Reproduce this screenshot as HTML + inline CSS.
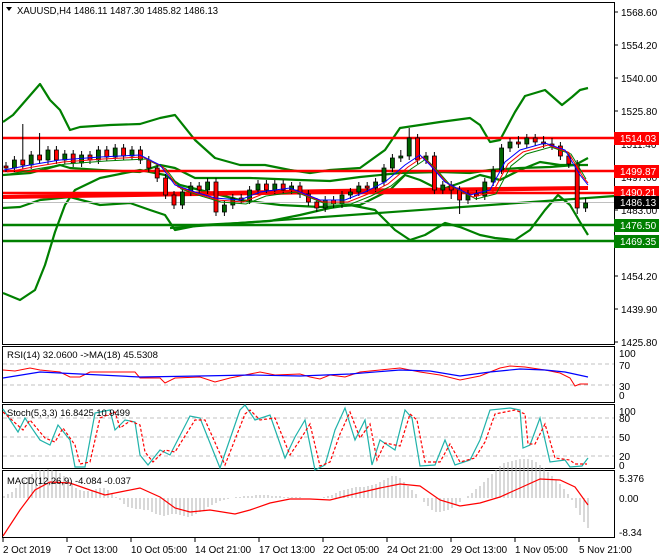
<!DOCTYPE html>
<html><head><meta charset="utf-8">
<style>
html,body{margin:0;padding:0;background:#fff;width:660px;height:560px;overflow:hidden}
svg{display:block;font-family:"Liberation Sans",Tahoma,sans-serif}
</style></head>
<body>
<svg width="660" height="560" xmlns="http://www.w3.org/2000/svg">
<rect width="660" height="560" fill="#fff"/>
<g fill="none" stroke="#000">
<rect x="2.5" y="2.5" width="612" height="342"/>
<rect x="2.5" y="346.5" width="612" height="56"/>
<rect x="2.5" y="404.5" width="612" height="64"/>
<rect x="2.5" y="470.5" width="612" height="67"/>
</g>
<g fill="none" stroke="#008000" stroke-width="2.2" stroke-linejoin="round">
<polyline points="3,122 13,115 40,84 50,100 60,110 70,130 80,127 110,125 140,124 160,118 175,115 195,140 215,158 240,165 265,165 290,170 310,173 330,170 360,168 385,150 400,128 420,125 440,122 470,118 480,125 490,142 500,140 515,112 525,96 545,90 562,105 572,97 580,90 588,88"/>
<polyline points="3,175 30,173 60,165 70,168 100,170 140,172 160,165 175,168 195,178 250,178 300,180 330,181 360,177 400,173 440,172 470,173 490,170 520,168 550,167 575,165 588,165"/>
<polyline points="3,208 20,207 40,200 70,197 100,205 130,203 150,210 165,215 175,230 200,225 240,223 270,221 300,215 330,208 350,205 375,210 395,230 410,240 425,235 445,223 460,227 480,235 495,238 515,240 530,230 545,210 558,195 570,205 580,222 588,235"/>
<polyline points="3,293 20,300 35,290 45,265 55,232 65,205 75,190 100,178 140,170 165,175 180,185 200,190 240,200 280,205 320,207 360,205 390,190 405,175 420,180 440,190 460,183 480,175 500,180 520,170 540,162 560,165 575,165 588,158"/>
<line x1="170" y1="228" x2="615" y2="196"/>
</g>
<g stroke-width="2.5">
<line x1="3" x2="614" y1="138" y2="138" stroke="#ff0000"/>
<line x1="3" x2="614" y1="171" y2="171" stroke="#ff0000"/>
<line x1="3" x2="614" y1="193" y2="193" stroke="#ff0000"/>
<line x1="3" x2="614" y1="225" y2="225" stroke="#008000"/>
<line x1="3" x2="614" y1="241" y2="241" stroke="#008000"/>
</g>
<line x1="3" x2="614" y1="202.5" y2="202.5" stroke="#c0c0c0"/>
<polygon points="3,195 330,189 588,186 588,190 330,194 3,199" fill="#ff0000"/>
<path fill="none" stroke="#000" stroke-width="1" d="M6 162V172M14.4 156V172M22.8 124V169M31.2 151V169M39.6 133V164M48 146V164M56.4 146V164M64.8 150V164M73.2 150V167M81.6 151V167M90 151V164M98.4 146V164M106.8 146V161M115.2 144V161M123.6 144V160M132 146V160M140.4 146V164M148.8 156V172M157.2 164V182M165.6 174V199M174 191V209M182.4 188V209M190.8 182V196M199.2 182V194M207.6 178V194M216 178V216M224.4 201V216M232.8 194V209M241.2 194V204M249.6 186V204M258 180V194M266.4 180V194M274.8 180V194M283.2 180V194M291.6 182V194M300 182V198M308.4 190V206M316.8 198V212M325.2 196V212M333.6 196V208M342 191V208M350.4 188V199M358.8 182V196M367.2 182V192M375.6 178V192M384 164V186M392.4 154V172M400.8 150V162M409.2 128V160M417.6 134V164M426 152V164M434.4 152V194M442.8 181V194M451.2 181V199M459.6 186V214M468 190V204M476.4 190V200M484.8 178V200M493.2 166V186M501.6 144V174M510 138V152M518.4 136V148M526.8 134V148M535.2 134V146M543.6 136V148M552 138V150M560.4 142V160M568.8 152V168M577.2 160V214M585.6 198V212"/>
<path fill="#006400" stroke="#000" stroke-width="0.8" d="M12.4 160h4v8h-4zM29.2 155h4v10h-4zM46 150h4v10h-4zM62.8 154h4v6h-4zM79.6 155h4v8h-4zM96.4 150h4v10h-4zM113.2 148h4v9h-4zM130 150h4v6h-4zM180.4 192h4v13h-4zM188.8 186h4v6h-4zM205.6 182h4v8h-4zM222.4 205h4v7h-4zM230.8 198h4v7h-4zM247.6 190h4v10h-4zM256 184h4v6h-4zM272.8 184h4v6h-4zM289.6 186h4v4h-4zM323.2 200h4v8h-4zM340 195h4v9h-4zM348.4 192h4v3h-4zM356.8 186h4v6h-4zM373.6 182h4v6h-4zM382 168h4v14h-4zM390.4 158h4v10h-4zM398.8 156h4v2h-4zM407.2 138h4v18h-4zM424 156h4v4h-4zM440.8 185h4v5h-4zM466 194h4v6h-4zM482.8 182h4v14h-4zM491.2 170h4v12h-4zM499.6 148h4v22h-4zM508 142h4v6h-4zM524.8 138h4v6h-4zM583.6 203h4v5h-4z"/>
<path fill="#ff0000" stroke="#000" stroke-width="0.8" d="M4 166h4v2h-4zM20.8 160h4v5h-4zM37.6 155h4v5h-4zM54.4 150h4v10h-4zM71.2 154h4v9h-4zM88 155h4v5h-4zM104.8 150h4v7h-4zM121.6 148h4v8h-4zM138.4 150h4v10h-4zM146.8 160h4v8h-4zM155.2 168h4v10h-4zM163.6 178h4v17h-4zM172 195h4v10h-4zM197.2 186h4v4h-4zM214 182h4v30h-4zM239.2 198h4v2h-4zM264.4 184h4v6h-4zM281.2 184h4v6h-4zM298 186h4v8h-4zM306.4 194h4v8h-4zM314.8 202h4v6h-4zM331.6 200h4v4h-4zM365.2 186h4v2h-4zM415.6 138h4v22h-4zM432.4 156h4v34h-4zM449.2 185h4v5h-4zM457.6 190h4v10h-4zM474.4 194h4v2h-4zM516.4 142h4v2h-4zM533.2 138h4v4h-4zM541.6 142h4v2h-4zM550 144h4v2h-4zM558.4 146h4v10h-4zM566.8 156h4v8h-4zM575.2 164h4v44h-4z"/>
<g fill="none" stroke-width="1">
<polyline stroke="#008000" points="10,174 36,169 66,164 106,161 146,159 166,169 181,189 201,196 221,202 246,204 266,196 296,192 326,204 351,204 371,196 391,186 411,169 426,159 436,169 451,186 476,199 496,194 511,166 526,154 551,147 571,154 586,179"/>
<polyline stroke="#ff0000" points="7,172 33,167 63,162 103,159 143,157 163,167 178,187 198,194 218,200 243,202 263,194 293,190 323,202 348,202 368,194 388,184 408,167 423,157 433,167 448,184 473,197 493,192 508,164 523,152 548,145 568,152 583,177 588,183"/>
<polyline stroke="#0000ff" points="4,170 30,165 60,160 100,157 140,155 160,165 175,185 195,192 215,198 240,200 260,192 290,188 320,200 345,200 365,192 385,182 405,165 420,155 430,165 445,182 470,195 490,190 505,162 520,150 545,143 565,150 580,175 588,185"/>
</g>
<g font-size="10" fill="#000">
<path stroke="#000" d="M614 12h4M614 45h4M614 78h4M614 111h4M614 144h4M614 177h4M614 210h4M614 243h4M614 276h4M614 309h4M614 342h4"/>
<text x="621" y="16">1568.60</text><text x="621" y="49">1554.20</text><text x="621" y="82">1540.00</text><text x="621" y="115">1525.80</text><text x="621" y="148">1511.40</text><text x="621" y="181">1497.00</text><text x="621" y="214">1483.00</text><text x="621" y="247">1468.60</text><text x="621" y="280">1454.20</text><text x="621" y="313">1439.90</text><text x="621" y="346">1425.80</text>
</g>
<g font-size="10" fill="#fff">
<rect x="614" y="132" width="45" height="13" fill="#ff0000"/><text x="620" y="142">1514.03</text>
<rect x="614" y="165" width="45" height="13" fill="#ff0000"/><text x="620" y="175">1499.87</text>
<rect x="614" y="186" width="45" height="13" fill="#ff0000"/><text x="620" y="196">1490.21</text>
<rect x="614" y="196" width="45" height="13" fill="#000"/><text x="620" y="206">1486.13</text>
<rect x="614" y="219" width="45" height="13" fill="#008000"/><text x="620" y="229">1476.50</text>
<rect x="614" y="235" width="45" height="13" fill="#008000"/><text x="620" y="245">1469.35</text>
</g>
<polygon points="6,7 12,7 9,11" fill="#000"/>
<text x="17" y="14" font-size="10" textLength="201" lengthAdjust="spacingAndGlyphs">XAUUSD,H4  1486.11 1487.30 1485.82 1486.13</text>
<g stroke="#c0c0c0" stroke-dasharray="4,3"><line x1="3" x2="614" y1="364" y2="364"/><line x1="3" x2="614" y1="385" y2="385"/></g>
<polyline fill="none" stroke="#ff0000" points="3,370 15,371 30,368 40,370 60,372 70,377 80,377 90,372 120,372 135,372 140,378 160,378 165,383 175,378 200,377 215,382 230,378 250,374 260,372 275,375 300,374 310,377 320,379 330,375 345,377 360,372 380,370 400,368 420,372 440,375 460,380 480,376 500,368 510,366 525,367 545,370 560,373 570,378 575,386 580,384 588,384"/>
<polyline fill="none" stroke="#0000ff" stroke-width="1.2" points="3,378 40,372 80,374 140,377 200,376 250,375 300,376 350,374 400,370 430,371 460,376 490,372 520,369 545,370 565,372 588,377"/>
<text x="7" y="358" font-size="9.5" textLength="151" lengthAdjust="spacingAndGlyphs">RSI(14) 32.0600  -&gt;MA(18) 45.5308</text>
<g font-size="10"><text x="619" y="357">100</text><text x="619" y="369">70</text><text x="619" y="390">30</text><text x="619" y="399">0</text></g>
<g stroke="#c0c0c0" stroke-dasharray="4,3"><line x1="3" x2="614" y1="418" y2="418"/><line x1="3" x2="614" y1="437" y2="437"/><line x1="3" x2="614" y1="456" y2="456"/></g>
<polyline fill="none" stroke="#20b2aa" stroke-width="1.2" points="3,409 18,432 25,418 40,440 50,445 58,425 70,440 75,467 85,467 95,413 110,410 115,430 125,420 135,422 140,455 148,465 160,450 170,455 190,416 200,418 220,468 240,410 245,405 255,420 270,415 285,458 295,437 305,420 315,470 325,465 335,430 345,408 355,440 365,420 372,465 380,440 395,450 405,410 412,418 420,466 435,465 445,440 455,465 470,460 480,440 490,410 510,408 520,410 523,448 530,445 540,418 550,462 565,460 570,467 582,466 588,458"/>
<polyline fill="none" stroke="#ff0000" stroke-width="1.2" stroke-dasharray="3,2" points="3,412 23,430 30,420 45,438 55,442 63,428 75,445 80,464 90,462 100,418 115,412 120,428 130,421 140,425 145,452 153,462 165,450 175,452 195,420 205,420 225,465 245,414 250,410 260,420 275,418 290,455 300,440 310,424 320,466 330,462 340,434 350,412 360,438 370,424 377,460 385,443 400,446 410,414 417,420 425,462 440,462 450,444 460,462 475,458 485,442 495,414 515,410 525,414 528,444 535,444 545,424 555,458 570,460 575,464 587,464"/>
<text x="7" y="416" font-size="9.5" textLength="123" lengthAdjust="spacingAndGlyphs">Stoch(5,3,3) 16.8425 10.9499</text>
<g font-size="10"><text x="619" y="415">100</text><text x="619" y="422">80</text><text x="619" y="441">50</text><text x="619" y="460">20</text><text x="619" y="469">0</text></g>
<path fill="none" stroke="#b0b0b0" d="M4 498V496M8 498V494M12 498V492M16 498V488M20 498V484M24 498V480M28 498V477M32 498V474M36 498V472M40 498V470M44 498V470M48 498V469M52 498V470M56 498V471M60 498V473M64 498V476M68 498V480M72 498V484M76 498V488M80 498V490M84 498V491M88 498V491M92 498V490M96 498V489M100 498V488M104 498V488M108 498V490M112 498V493M116 498V497M120 498V500M124 498V504M128 498V507M132 498V508M136 498V509M140 498V509M144 498V510M148 498V510M152 498V512M156 498V514M160 498V515M164 498V516M168 498V515M172 498V514M176 498V514M180 498V515M184 498V516M188 498V517M192 498V516M196 498V514M200 498V512M204 498V510M208 498V507M212 498V505M216 498V503M220 498V501M224 498V500M228 498V499M236 498V497M240 498V497M244 498V496M248 498V496M252 498V496M256 498V495M260 498V495M264 498V495M268 498V495M272 498V496M276 498V496M280 498V496M284 498V497M288 498V497M292 498V497M296 498V497M300 498V497M324 498V497M328 498V496M332 498V495M336 498V493M340 498V491M344 498V490M348 498V489M352 498V488M356 498V487M360 498V487M364 498V487M368 498V486M372 498V485M376 498V484M380 498V482M384 498V480M388 498V478M392 498V476M396 498V476M400 498V478M404 498V482M408 498V486M412 498V490M416 498V494M424 498V502M428 498V506M432 498V510M436 498V512M440 498V512M444 498V511M448 498V510M452 498V508M456 498V505M460 498V502M468 498V496M472 498V493M476 498V489M480 498V486M484 498V482M488 498V478M492 498V474M496 498V470M500 498V466M504 498V463M508 498V462M512 498V461M516 498V460M520 498V459M524 498V459M528 498V459M532 498V460M536 498V462M540 498V465M544 498V468M548 498V472M552 498V476M556 498V480M560 498V484M564 498V489M568 498V494M572 498V500M576 498V508M580 498V515M584 498V522M588 498V528"/>
<polyline fill="none" stroke="#ff0000" stroke-width="1.2" points="3,536 20,510 35,490 50,482 70,483 90,490 105,495 120,492 140,488 160,497 175,508 190,512 210,510 235,514 250,510 270,503 290,499 310,499 330,500 350,495 380,488 400,484 420,486 440,500 460,506 480,503 500,497 520,488 540,479 560,480 575,487 588,505"/>
<text x="7" y="484" font-size="9.5" textLength="124" lengthAdjust="spacingAndGlyphs">MACD(12,26,9) -4.084 -0.037</text>
<g font-size="10"><text x="619" y="482">5.376</text><text x="619" y="502">0.00</text><text x="619" y="536">-8.34</text></g>
<path stroke="#000" d="M3 538v4M67 538v4M131 538v4M195 538v4M259 538v4M323 538v4M387 538v4M451 538v4M515 538v4M579 538v4"/>
<g font-size="9.8">
<text x="3" y="553">2 Oct 2019</text><text x="67" y="553">7 Oct 13:00</text><text x="131" y="553">10 Oct 05:00</text><text x="195" y="553">14 Oct 21:00</text><text x="259" y="553">17 Oct 13:00</text><text x="323" y="553">22 Oct 05:00</text><text x="387" y="553">24 Oct 21:00</text><text x="451" y="553">29 Oct 13:00</text><text x="515" y="553">1 Nov 05:00</text><text x="579" y="553">5 Nov 21:00</text>
</g>
</svg>
</body></html>
